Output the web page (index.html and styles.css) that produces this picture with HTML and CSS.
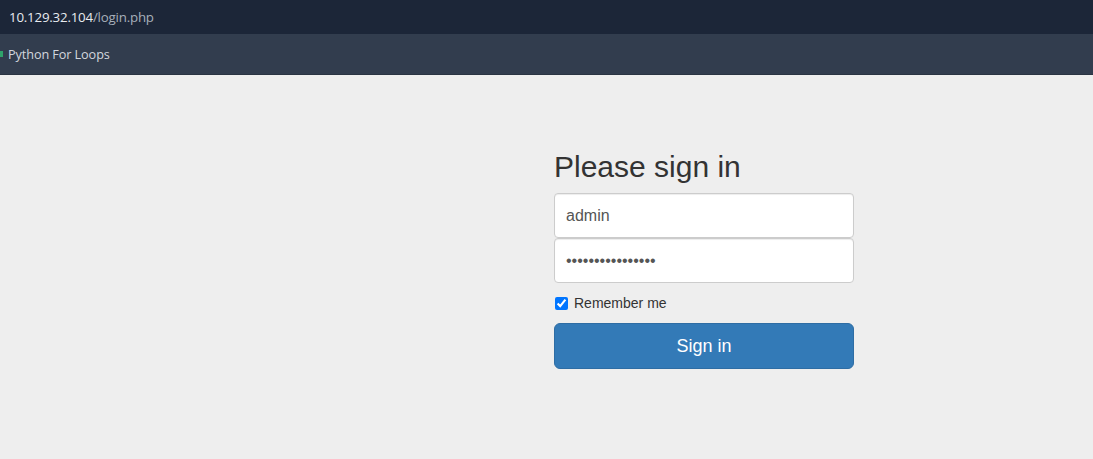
FILE: index.html
```html
<!DOCTYPE html>
<html lang="en">
<head>
  <meta charset="UTF-8" />
  <title>Login</title>
  <link rel="stylesheet" href="styles.css">
</head>
<body>

  <div class="urlbar">
    <span class="host">10.129.32.104</span><span class="path">/login.php</span>
  </div>

  <div class="bookmarks">
    <span class="favicon"></span>
    <span class="bookmark">Python For Loops</span>
  </div>

  <main class="page">
    <form class="form-signin" onsubmit="return false">
      <h2>Please sign in</h2>
      <input type="text" class="form-control" value="admin">
      <input type="password" class="form-control" value="password12345678">
      <div class="checkbox">
        <label><input type="checkbox" checked> Remember me</label>
      </div>
      <button class="btn" type="submit">Sign in</button>
    </form>
  </main>

</body>
</html>
```

FILE: styles.css
```css
body {
  margin: 0;
  background: #eeeeee;
  font-family: 'Liberation Sans', Arial, sans-serif;
  color: #333333;
}

.urlbar {
  height: 34px;
  background: #1c2638;
  display: flex;
  align-items: center;
  padding-left: 9px;
  font-family: 'Open Sans', 'DejaVu Sans', sans-serif;
  font-size: 13.3px;
  letter-spacing: -0.2px;
}

.host {
  color: #e8ebef;
}

.path {
  color: #a7afba;
}

.bookmarks {
  height: 40px;
  background: #323d4e;
  border-bottom: 1px solid #2a3442;
  display: flex;
  align-items: center;
  font-family: 'Open Sans', 'DejaVu Sans', sans-serif;
  font-size: 12.7px;
  color: #d2d7de;
  letter-spacing: -0.1px;
}

.favicon {
  width: 3px;
  height: 6px;
  background: #2fa36b;
  margin-right: 5px;
}

.page {
  height: 384px;
}

.form-signin {
  width: 300px;
  margin-left: 554px;
  padding-top: 75px;
}

.form-signin h2 {
  font-size: 30px;
  font-weight: 500;
  line-height: 1.1;
  margin: 0 0 10px;
}

.form-control {
  display: block;
  box-sizing: border-box;
  width: 300px;
  height: 45px;
  margin: 0;
  padding: 10px 11px;
  font-family: 'Liberation Sans', Arial, sans-serif;
  font-size: 16px;
  color: #555555;
  background: #ffffff;
  border: 1px solid #cccccc;
  border-radius: 4px;
  box-shadow: inset 0 1px 1px rgba(0,0,0,0.075);
  outline: none;
}

.checkbox {
  margin: 10px 0;
  font-size: 14px;
  line-height: 20px;
}

.checkbox label {
  display: flex;
  align-items: center;
}

.checkbox input {
  width: 13px;
  height: 13px;
  margin: 0 6px 0 1px;
}

.btn {
  display: block;
  box-sizing: border-box;
  width: 300px;
  height: 46px;
  padding: 11px 16px 9px;
  font-family: 'Liberation Sans', Arial, sans-serif;
  font-size: 18px;
  line-height: 1.3333;
  color: #ffffff;
  background: #337ab7;
  border: 1px solid #2e6da4;
  border-radius: 6px;
  cursor: pointer;
}
```
